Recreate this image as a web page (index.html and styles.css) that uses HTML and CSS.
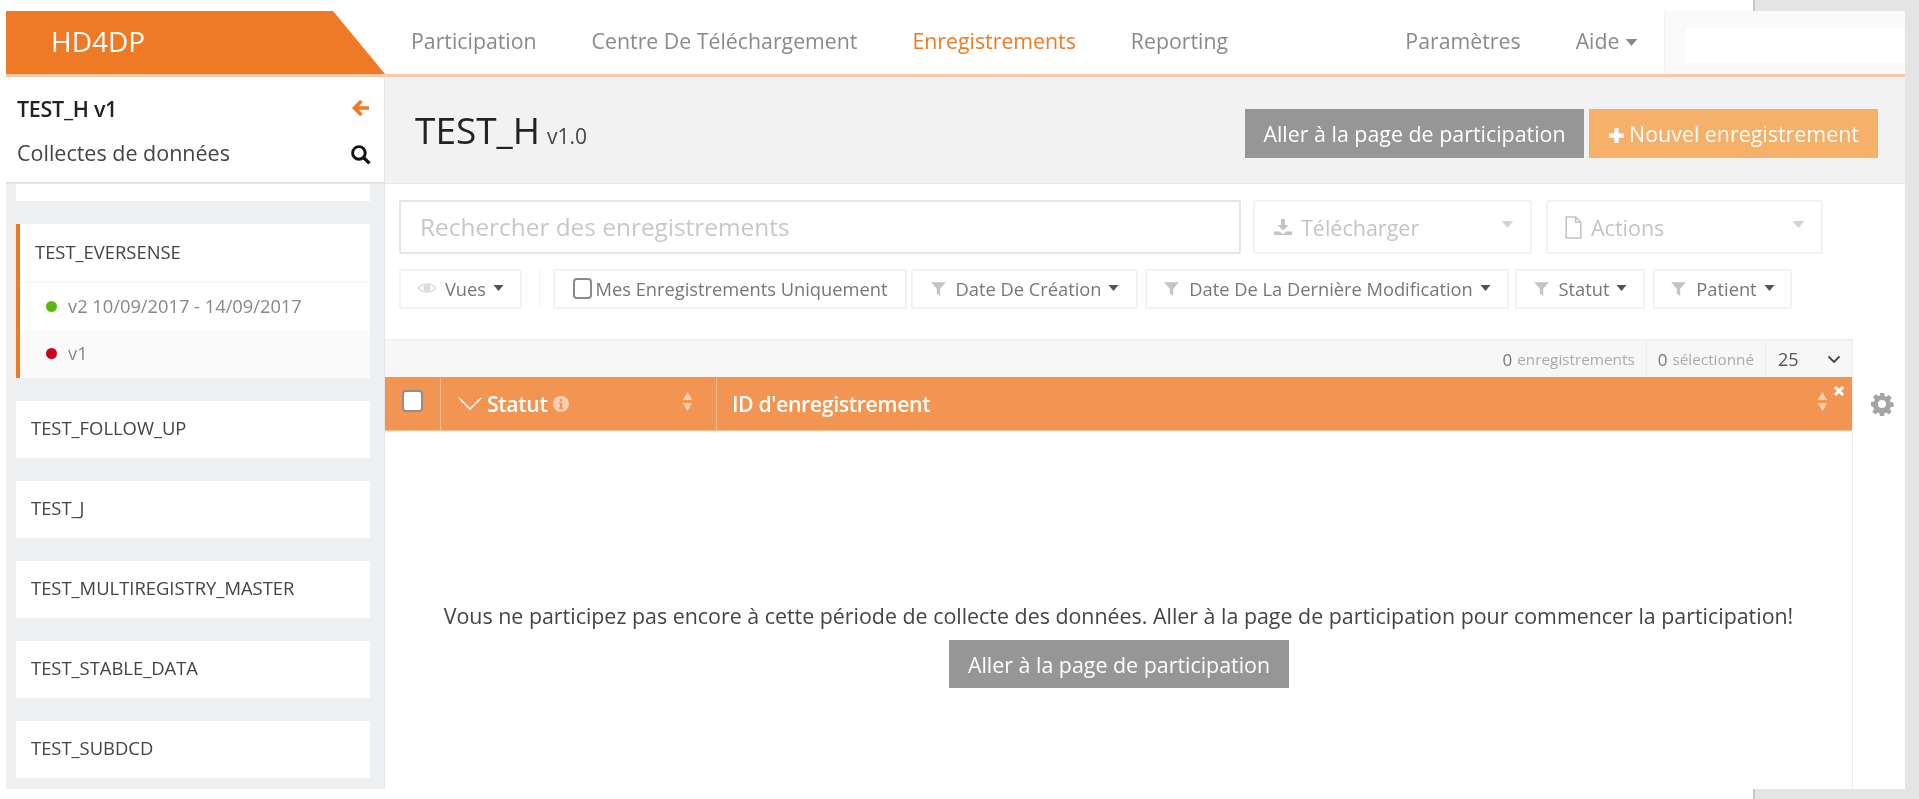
FILE: index.html
```html
<!DOCTYPE html>
<html lang="fr">
<head>
<meta charset="utf-8">
<title>HD4DP</title>
<link rel="stylesheet" href="styles.css">
</head>
<body>
<svg class="defs" width="0" height="0" aria-hidden="true">
  <defs>
    <symbol id="i-filter" viewBox="0 0 16 16"><path d="M1 2h14L9.600 8.200V15L6.400 12.600V8.200z" fill="currentColor"/></symbol>
    <symbol id="i-caret" viewBox="0 0 10 6"><path d="M0 0h10L5 6z" fill="currentColor"/></symbol>
    <symbol id="i-sort" viewBox="0 0 10 18"><path d="M5 0l4.500 7.500h-9zM5 18L.5 10.500h9z" fill="currentColor"/></symbol>
  </defs>
</svg>
<div class="backdrop"></div>
<div class="app">
  <header class="topbar">
    <div class="logo">HD4DP</div>
    <nav class="nav">
      <a class="nav-link">Participation</a>
      <a class="nav-link">Centre De Téléchargement</a>
      <a class="nav-link active">Enregistrements</a>
      <a class="nav-link">Reporting</a>
    </nav>
    <nav class="nav nav-right">
      <a class="nav-link">Paramètres</a>
      <a class="nav-link">Aide <svg class="caret nav-caret"><use href="#i-caret"/></svg></a>
    </nav>
    <div class="user-slot"><div class="user-field"></div></div>
  </header>
  <div class="body">
    <aside class="sidebar">
      <div class="side-head">
        <div class="side-row">
          <strong class="side-title">TEST_H v1</strong>
          <svg class="side-back" viewBox="0 0 20 20"><path d="M18 10H4M10.500 3L3.500 10l7 7" fill="none" stroke="currentColor" stroke-width="3.600"/></svg>
        </div>
        <div class="side-row">
          <span class="side-sub">Collectes de données</span>
          <svg class="side-search" viewBox="0 0 20 20"><circle cx="8.500" cy="8.500" r="6" fill="none" stroke="currentColor" stroke-width="2.800"/><path d="M13 13l5.500 5.500" stroke="currentColor" stroke-width="3.200"/></svg>
        </div>
      </div>
      <div class="side-list">
        <div class="card card-sliver"></div>
        <div class="card card-open">
          <div class="card-name">TEST_EVERSENSE</div>
          <div class="version"><span class="dot dot-green"></span>v2 10/09/2017 - 14/09/2017</div>
          <div class="version version-alt"><span class="dot dot-red"></span>v1</div>
        </div>
        <div class="card">TEST_FOLLOW_UP</div>
        <div class="card">TEST_J</div>
        <div class="card">TEST_MULTIREGISTRY_MASTER</div>
        <div class="card">TEST_STABLE_DATA</div>
        <div class="card">TEST_SUBDCD</div>
      </div>
    </aside>
    <main class="main">
      <div class="page-head">
        <h1 class="page-title"><span>TEST_H</span><small>v1.0</small></h1>
        <div class="head-actions">
          <button class="btn btn-gray">Aller à la page de participation</button>
          <button class="btn btn-orange"><svg class="plus" viewBox="0 0 16 16"><path d="M6 1h4v5h5v4h-5v5H6v-5H1V6h5z" fill="currentColor"/></svg>Nouvel enregistrement</button>
        </div>
      </div>
      <div class="toolbar">
        <div class="tool-row tool-row-a">
          <div class="search">Rechercher des enregistrements</div>
          <div class="select select-dl">
            <svg class="sel-icon" viewBox="0 0 20 20"><path d="M8 2h4v6h3.500L10 13.500 4.500 8H8zM1 14.500h5.500L10 17l3.500-2.500H19V18H1z" fill="currentColor"/></svg>
            <span>Télécharger</span>
            <svg class="caret sel-caret"><use href="#i-caret"/></svg>
          </div>
          <div class="select select-act">
            <svg class="sel-icon sel-file" viewBox="0 0 18 22"><path d="M2 1h9l5 5v15H2zM11 1v5h5" fill="none" stroke="currentColor" stroke-width="1.500"/></svg>
            <span>Actions</span>
            <svg class="caret sel-caret"><use href="#i-caret"/></svg>
          </div>
        </div>
        <div class="tool-row tool-row-b">
          <div class="chip chip-views">
            <svg class="eye" viewBox="0 0 20 14"><path fill="currentColor" fill-rule="evenodd" d="M0.500 7C4 0.500 16 0.500 19.500 7 16 13.500 4 13.500 0.500 7zM2.500 7C5 11.500 15 11.500 17.500 7 15 2.500 5 2.500 2.500 7z"/><circle cx="10" cy="7" r="3.600" fill="currentColor"/></svg>
            Vues <svg class="caret"><use href="#i-caret"/></svg>
          </div>
          <span class="divider"></span>
          <div class="chip chip-mine"><span class="check"></span>Mes Enregistrements Uniquement</div>
          <div class="chip chip-created"><svg class="funnel"><use href="#i-filter"/></svg>Date De Création <svg class="caret"><use href="#i-caret"/></svg></div>
          <div class="chip chip-modified"><svg class="funnel"><use href="#i-filter"/></svg>Date De La Dernière Modification <svg class="caret"><use href="#i-caret"/></svg></div>
          <div class="chip chip-status"><svg class="funnel"><use href="#i-filter"/></svg>Statut <svg class="caret"><use href="#i-caret"/></svg></div>
          <div class="chip chip-patient"><svg class="funnel"><use href="#i-filter"/></svg>Patient <svg class="caret"><use href="#i-caret"/></svg></div>
        </div>
      </div>
      <div class="table-wrap">
        <section class="table">
          <div class="table-info">
            <div class="info-cell"><b>0</b> enregistrements</div>
            <div class="info-cell"><b>0</b> sélectionné</div>
            <div class="info-cell info-size"><span>25</span>
              <svg class="info-chev" viewBox="0 0 14 9"><path d="M1.500 1.500L7 7l5.500-5.500" fill="none" stroke="currentColor" stroke-width="1.800"/></svg>
            </div>
          </div>
          <div class="table-head">
            <div class="col col-check"><span class="head-check"></span></div>
            <div class="col col-status">
              <svg class="head-chev" viewBox="0 0 24 14"><path d="M1 1l11 11L23 1" fill="none" stroke="currentColor" stroke-width="1.500"/></svg>
              <span>Statut</span>
              <svg class="head-info" viewBox="0 0 16 16"><circle cx="8" cy="8" r="8" fill="currentColor"/><path d="M6.800 3h2.400v2.200H6.800zM6.300 6.500h2.900V11.500h1v1.500H5.900v-1.500h1V8H6.300z" fill="#f29553"/></svg>
              <svg class="sort"><use href="#i-sort"/></svg>
            </div>
            <div class="col col-id">
              <span>ID d'enregistrement</span>
              <svg class="sort"><use href="#i-sort"/></svg>
              <svg class="head-close" viewBox="0 0 12 12"><path d="M2 2l8 8M10 2l-8 8" stroke="currentColor" stroke-width="3"/></svg>
            </div>
          </div>
          <div class="table-body">
            <p class="empty">Vous ne participez pas encore à cette période de collecte des données. Aller à la page de participation pour commencer la participation!</p>
            <button class="btn btn-gray btn-empty">Aller à la page de participation</button>
          </div>
        </section>
        <div class="gear-col">
          <svg class="gear" viewBox="0 0 24 24"><path fill="currentColor" fill-rule="evenodd" d="M10 1h4l.6 3.100 1.700.7 2.600-1.800 2.800 2.800-1.800 2.600.7 1.700 3 .6v4l-3.100.6-.7 1.700 1.800 2.600-2.800 2.800-2.600-1.800-1.700.7-.5 3.100h-4l-.6-3.100-1.700-.7-2.600 1.800-2.800-2.800 1.800-2.600-.7-1.700L1 14v-4l3.100-.6.700-1.700L3 5.100 5.800 2.300l2.600 1.800 1.700-.7zM12 8a4 4 0 1 0 0 8 4 4 0 0 0 0-8z"/></svg>
        </div>
      </div>
    </main>
  </div>
</div>
</body>
</html>
```

FILE: styles.css
```css
* { box-sizing: border-box; }
html, body { margin: 0; height: 100%; overflow: hidden; }
body {
  position: relative;
  background: #fff;
  font-family: "Open Sans", "Noto Sans", sans-serif;
  color: #555;
  padding: 11px 14px 10px 6px;
}
.defs { position: absolute; }
.backdrop {
  position: absolute;
  top: 0; right: 0; bottom: 0;
  width: 166px;
  background: #e4e4e4;
  border-left: 2px solid #c9c9c9;
}
.app {
  position: relative;
  height: 778px;
  display: flex;
  flex-direction: column;
  background: #fff;
  filter: blur(0.4px);
}

/* top bar */
.topbar {
  height: 66px;
  flex: none;
  display: flex;
  border-bottom: 3px solid #f8c9a9;
  background: #fff;
}
.logo {
  width: 379px;
  flex: none;
  padding: 10px 0 0 45px;
  font-size: 28px;
  line-height: 40px;
  color: #fff;
  background: #ef7a26;
  clip-path: polygon(0 0, 327px 0, 100% 100%, 0 100%);
}
.nav {
  display: flex;
  align-items: center;
  gap: 55px;
  padding: 0 0 5px 26px;
  font-size: 21.300px;
  color: #8a8a8a;
}
.nav-right { margin-left: auto; padding-left: 0; }
.nav-link.active { color: #ef7a26; }
.caret { display: inline-block; width: 10px; height: 6px; color: #555; vertical-align: middle; }
.nav-caret { width: 13px; height: 7px; color: #8a8a8a; }
.user-slot {
  width: 241px;
  margin-left: 26px;
  flex: none;
  padding: 17px 0 11px 21px;
  background: #fafafa;
  border-left: 1px solid #f2f2f2;
}
.user-field { height: 35px; background: #fff; }

.body { flex: 1; display: flex; min-height: 0; }

/* sidebar */
.sidebar {
  width: 379px;
  flex: none;
  background: #eef0f2;
  border-right: 1px solid #e4e6e8;
  overflow: hidden;
}
.side-head {
  height: 107px;
  padding: 8px 13px 0 11px;
  background: #fff;
  border-bottom: 2px solid #e2e2e2;
}
.side-row { display: flex; align-items: center; justify-content: space-between; height: 46px; }
.side-title { font-size: 21.500px; font-weight: 600; letter-spacing: -0.3px; color: #222; }
.side-sub { font-size: 21.500px; color: #444; line-height: 28px; margin-bottom: 2px; }
.side-back { width: 20px; height: 20px; color: #ef7a26; }
.side-search { width: 21px; height: 21px; color: #111; }
.side-list { display: flex; flex-direction: column; gap: 23px; padding: 0 14px 0 10px; }
.card {
  height: 57px;
  flex: none;
  display: flex;
  align-items: center;
  padding: 0 0 4px 15px;
  background: #fff;
  font-size: 18.400px;
  color: #444;
}
.card-sliver { height: 17px; }
.card-open {
  height: 154px;
  display: block;
  padding: 0;
  border-left: 4px solid #ef7a26;
}
.card-name {
  height: 59px;
  display: flex;
  align-items: center;
  padding: 0 0 4px 15px;
  border-bottom: 1px solid #f5f5f5;
}
.version {
  height: 47px;
  display: flex;
  align-items: center;
  padding: 0 0 2px 26px;
  font-size: 18.300px;
  color: #888;
}
.version-alt { height: 48px; padding-bottom: 4px; background: #fafafa; }
.dot { width: 11px; height: 11px; margin: 2px 11px 0 0; border-radius: 50%; }
.dot-green { background: #5cb811; }
.dot-red { background: #d0021b; }

/* main */
.main { flex: 1; min-width: 0; display: flex; flex-direction: column; }
.page-head {
  height: 107px;
  flex: none;
  display: flex;
  align-items: center;
  justify-content: space-between;
  padding: 6px 27px 0 30px;
  background: #f2f2f2;
  border-bottom: 1px solid #e8e8e8;
}
.page-title { display: flex; align-items: baseline; gap: 7px; margin: 0; font-size: 37px; line-height: 48px; font-weight: 400; color: #222; }
.page-title small { font-size: 21px; color: #444; }
.head-actions { display: flex; gap: 5px; }
.btn {
  height: 49px;
  border: 0;
  padding: 0;
  font-family: inherit;
  font-size: 21.400px;
  color: #fff;
}
.btn-gray { width: 339px; background: #969696; }
.btn-orange { width: 289px; background: #f7b06a; }
.plus { width: 17px; height: 17px; margin-right: 4px; vertical-align: -2px; }

/* toolbar */
.toolbar { flex: none; padding: 16px 0 0 14px; }
.tool-row { display: flex; }
.tool-row-a { height: 54px; gap: 12px; }
.search {
  width: 842px;
  display: flex;
  align-items: center;
  padding: 0 0 2px 19px;
  font-size: 24.400px;
  color: #c8c8c8;
  border: 2px solid #e6e6e6;
  border-radius: 2px;
}
.select {
  display: flex;
  align-items: center;
  gap: 8px;
  font-size: 21.500px;
  color: #c4c4c4;
  border: 2px solid #f2f2f2;
  border-radius: 2px;
}
.select-dl { width: 279px; padding: 0 16px 0 18px; }
.select-act { width: 277px; margin-left: 2px; padding: 0 16px 0 16px; }
.sel-icon { width: 20px; height: 20px; color: #c4c4c4; }
.sel-file { height: 23px; width: 19px; }
.sel-caret { margin: -6px 0 0 auto; width: 13px; height: 7px; color: #d4d4d4; }
.tool-row-b { height: 40px; margin-top: 15px; gap: 6px; }
.chip {
  display: flex;
  align-items: center;
  justify-content: center;
  gap: 7px;
  padding-bottom: 2px;
  font-size: 18.300px;
  color: #777;
  background: #fff;
  border: 2px solid #f3f3f3;
  border-radius: 2px;
}
.chip .caret { width: 11px; height: 6px; color: #555; }
.chip-views { width: 123px; }
.chip-mine { width: 354px; }
.chip-created { width: 227px; margin-left: -2px; }
.chip-modified { width: 364px; margin-left: 1px; }
.chip-status { width: 130px; }
.chip-patient { width: 139px; margin-left: 2px; }
.eye { width: 20px; height: 14px; margin-right: 1px; color: #dcdcdc; }
.funnel { width: 17px; height: 17px; margin-right: 2px; color: #c4c4c4; }
.check {
  width: 19px; height: 21px;
  border: 2px solid #8a8a8a;
  border-radius: 4px;
  margin-right: -3px;
}
.divider { width: 1px; margin: 0 7px 0 11px; background: #f2f2f2; }

/* table */
.table-wrap { flex: 1; min-height: 0; display: flex; margin-top: 30px; }
.table {
  width: 1468px;
  flex: none;
  display: flex;
  flex-direction: column;
  border-right: 1px solid #ececec;
}
.table-info {
  height: 38px;
  flex: none;
  display: flex;
  justify-content: flex-end;
  align-items: center;
  background: #f7f7f7;
  border-top: 2px solid #f0f0f0;
  font-size: 15.300px;
  color: #aaa;
}
.info-cell { height: 100%; display: flex; align-items: center; gap: 5px; padding: 0 11px; border-right: 1px solid #ececec; }
.info-cell b { font-size: 17px; font-weight: 400; color: #777; }
.info-size { width: 86px; padding-left: 12px; border-right: 0; font-size: 18px; color: #555; justify-content: space-between; }
.info-chev { width: 14px; height: 9px; margin-right: 0; color: #444; }
.table-head {
  height: 54px;
  flex: none;
  display: flex;
  background: #f29553;
  border-bottom: 1px solid #f8bb90;
  color: #fff;
  font-size: 21.300px;
  font-weight: 600;
  letter-spacing: -0.4px;
}
.col { position: relative; display: flex; align-items: center; }
.col-check { width: 56px; justify-content: center; padding-right: 1px; border-right: 1px solid #f8bb90; }
.head-check {
  width: 21px; height: 22px;
  margin-top: -6px;
  background: #fff;
  border: 2px solid #8f8f8f;
  border-radius: 4px;
}
.col-status { width: 276px; padding-left: 17px; border-right: 1px solid #f8bb90; }
.head-chev { width: 24px; height: 14px; margin-right: 5px; color: #fff; }
.head-info { width: 16px; height: 16px; margin-left: 6px; color: #f9ceb0; }
.sort { width: 11px; height: 19px; margin: -5px 0 0 auto; color: #f9ceb0; }
.col-status .sort { margin-right: 23px; }
.col-id { flex: 1; padding-left: 15px; }
.col-id .sort { margin-right: 24px; }
.head-close { position: absolute; top: 8px; right: 7px; width: 12px; height: 12px; color: #fff; }
.table-body { flex: 1; display: flex; flex-direction: column; align-items: center; padding-top: 170px; }
.empty { margin: 0; font-size: 21.400px; line-height: 30px; color: #444; white-space: nowrap; }
.btn-empty { width: 340px; height: 48px; margin: 9px 0 0 1px; }
.gear-col { flex: 1; display: flex; justify-content: center; padding: 53px 0 0 6px; }
.gear { width: 24px; height: 24px; color: #a4a4a4; }
```
